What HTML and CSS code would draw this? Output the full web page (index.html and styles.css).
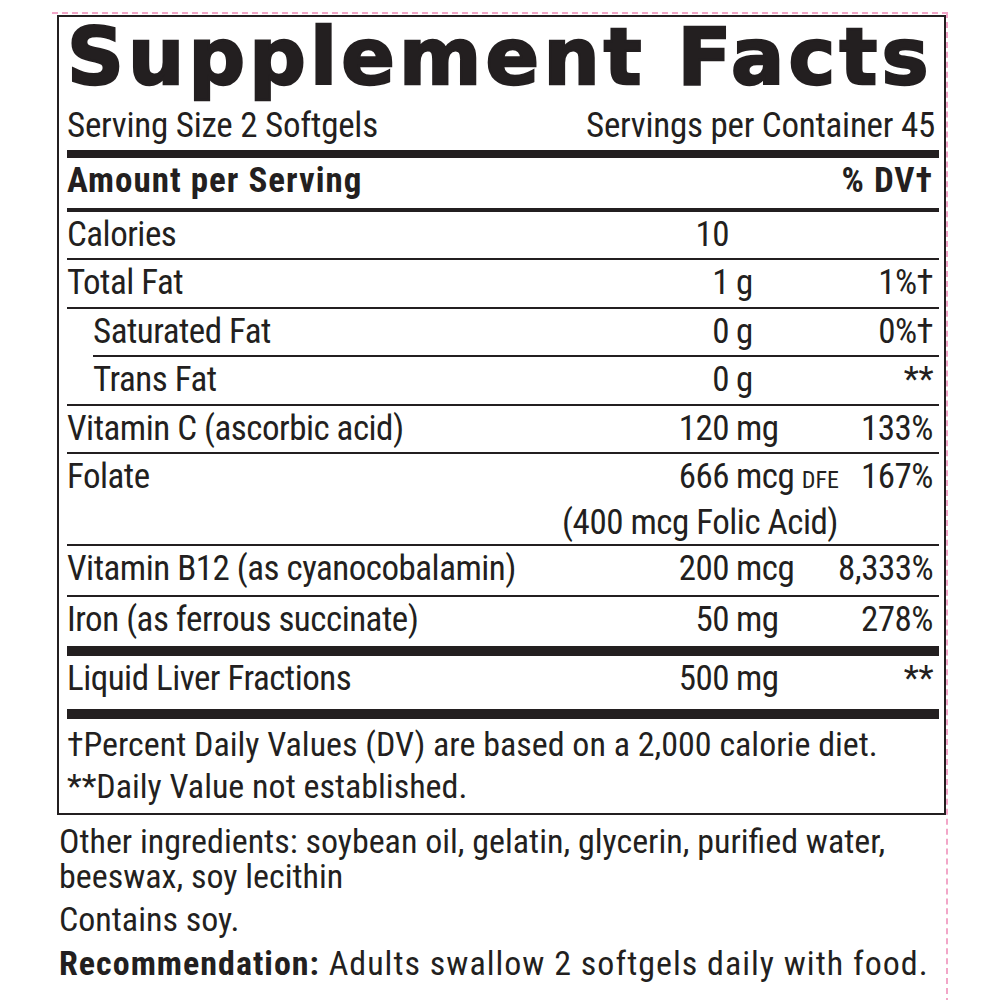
FILE: index.html
```html
<!DOCTYPE html>
<html lang="en">
<head>
<meta charset="utf-8">
<title>Supplement Facts</title>
<link rel="stylesheet" href="styles.css">
</head>
<body>
<div class="sheet">
  <section class="facts">
    <h1 class="title">Supplement Facts</h1>
    <div class="serving"><span>Serving Size 2 Softgels</span><span>Servings per Container 45</span></div>
    <div class="head"><span>Amount per Serving</span><span>% DV†</span></div>
    <div class="row r-cal"><span class="name">Calories</span><span class="num">10</span><span class="unit"></span><span class="dv"></span></div>
    <div class="row"><span class="name">Total Fat</span><span class="num">1</span><span class="unit">g</span><span class="dv">1%†</span></div>
    <div class="row r-sat"><span class="name">Saturated Fat</span><span class="num">0</span><span class="unit">g</span><span class="dv">0%†</span></div>
    <div class="row r-trans"><span class="name">Trans Fat</span><span class="num">0</span><span class="unit">g</span><span class="dv">**</span></div>
    <div class="row"><span class="name">Vitamin C (ascorbic acid)</span><span class="num">120</span><span class="unit">mg</span><span class="dv">133%</span></div>
    <div class="row r-folate"><span class="name">Folate</span><span class="num">666</span><span class="unit">mcg <span class="small">DFE</span></span><span class="dv">167%</span><span class="note">(400 mcg Folic Acid)</span></div>
    <div class="row r-b12"><span class="name">Vitamin B12 (as cyanocobalamin)</span><span class="num">200</span><span class="unit">mcg</span><span class="dv">8,333%</span></div>
    <div class="row r-iron"><span class="name">Iron (as ferrous succinate)</span><span class="num">50</span><span class="unit">mg</span><span class="dv">278%</span></div>
    <div class="row r-liver"><span class="name">Liquid Liver Fractions</span><span class="num">500</span><span class="unit">mg</span><span class="dv">**</span></div>
    <div class="foot">
      <p>†Percent Daily Values (DV) are based on a 2,000 calorie diet.</p>
      <p>**Daily Value not established.</p>
    </div>
  </section>
  <div class="extra">
    <p>Other ingredients: soybean oil, gelatin, glycerin, purified water, beeswax, soy lecithin</p>
    <p>Contains soy.</p>
    <p class="rec"><b>Recommendation:</b> Adults swallow 2 softgels daily with food.</p>
  </div>
</div>
</body>
</html>
```
FILE: styles.css
```css
html, body {
  margin: 0;
  padding: 0;
  background: #ffffff;
}
body {
  color: #231f20;
  font-family: "Roboto Condensed", "Open Sans", "Liberation Sans", sans-serif;
  font-stretch: 75%;
}
.sheet {
  margin: 12px 0 0 52px;
  width: 894px;
  min-height: 990px;
  border-top: 2px dashed #f2a6c8;
  border-right: 2px dashed #f2a6c8;
}
.facts {
  box-sizing: border-box;
  width: 889px;
  margin: 1px 0 0 5px;
  border: 2px solid #231f20;
  padding: 0 5px 0 8px;
}
.title {
  margin: 0;
  padding-top: 2px;
  font-family: "DejaVu Sans", sans-serif;
  font-stretch: normal;
  font-weight: bold;
  font-size: 79px;
  line-height: 76px;
  letter-spacing: 4.2px;
  -webkit-text-stroke: 2.4px #231f20;
  white-space: nowrap;
}
.serving {
  display: flex;
  justify-content: space-between;
  margin-top: 11px;
  padding: 0 4px 4px 0;
  font-size: 35px;
  line-height: 40px;
  letter-spacing: -0.25px;
  border-bottom: 8px solid #231f20;
}
.head {
  display: flex;
  justify-content: space-between;
  padding: 3px 6px 7px 0;
  font-size: 35px;
  line-height: 40px;
  font-weight: bold;
  letter-spacing: 1px;
  border-bottom: 4px solid #231f20;
}
.row {
  display: grid;
  grid-template-columns: 1fr 90px 109px 101px;
  padding: 3px 0 3.5px;
  font-size: 35px;
  line-height: 40px;
  letter-spacing: -0.5px;
  white-space: nowrap;
  border-bottom: 2px solid #231f20;
}
.r-cal {
  padding-bottom: 3px;
}
.num {
  text-align: right;
}
.unit {
  padding-left: 7px;
}
.dv {
  text-align: right;
  padding-right: 6px;
}
.small {
  font-size: 24px;
  letter-spacing: 0;
}
.r-sat {
  margin-left: 26px;
}
.r-trans {
  padding-left: 26px;
}
.r-folate {
  padding-bottom: 1px;
}
.note {
  grid-column: 1 / 4;
  justify-self: end;
  margin-top: 3px;
}
.r-b12 {
  padding-bottom: 6px;
}
.r-iron {
  padding-bottom: 6px;
  border-bottom-width: 10px;
}
.r-liver {
  padding-bottom: 10px;
  border-bottom-width: 10px;
}
.foot {
  padding: 4px 0 6px;
  font-size: 34px;
  line-height: 42px;
}
.foot p {
  margin: 0;
}
.extra {
  margin: 9px 0 0 7px;
  font-size: 34px;
  line-height: 35px;
}
.extra p {
  margin: 0 0 8px;
}
.extra .rec {
  margin-top: 9px;
  letter-spacing: 1px;
}
```
